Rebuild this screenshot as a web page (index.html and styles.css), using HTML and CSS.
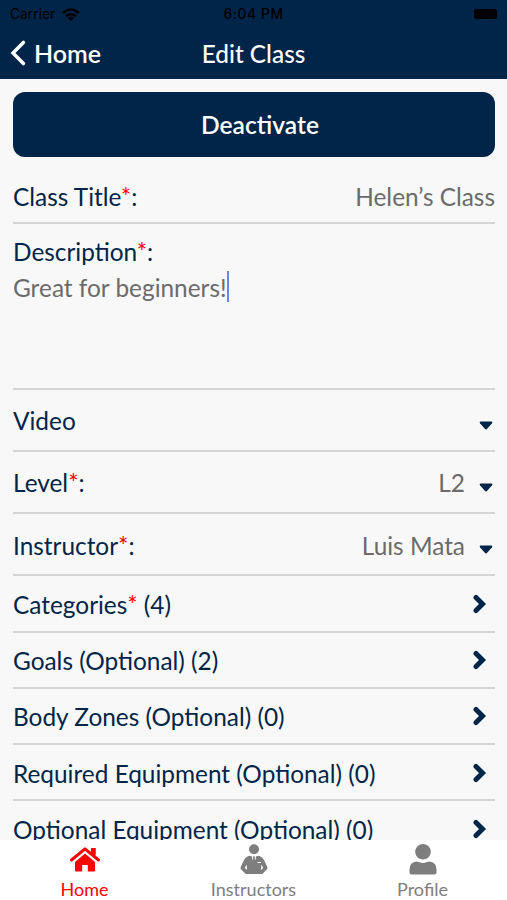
FILE: index.html
```html
<!DOCTYPE html>
<html lang="en">
<head>
<meta charset="utf-8">
<title>Edit Class</title>
<link rel="stylesheet" href="styles.css">
</head>
<body>
<div class="app">
  <header class="top">
    <div class="status">
      <div class="carrier"><span>Carrier</span>
        <svg class="wifi" viewBox="0 0 18 13" width="18" height="13"><g fill="none" stroke="#000" stroke-width="2.6"><path d="M1 5 Q9 -2 17 5"/><path d="M4 8.3 Q9 4 14 8.3"/></g><path d="M6 10 Q9 7.6 12 10 L9 13Z"/></svg>
      </div>
      <div class="time">6:04 PM</div>
      <div class="battery"><i></i></div>
    </div>
    <div class="nav">
      <div class="back">
        <svg viewBox="0 0 16 26" width="16" height="26"><path d="M13.4 2.4 L3 13 L13.4 23.6" fill="none" stroke="#fff" stroke-width="3.5" stroke-linecap="round"/></svg>
        <span>Home</span>
      </div>
      <h1>Edit Class</h1>
      <div></div>
    </div>
  </header>
  <main class="form">
    <button class="deactivate">Deactivate</button>
    <div class="row title"><label>Class Title<b>*</b>:</label><span class="value">Helen’s Class</span></div>
    <div class="description"><label>Description<b>*</b>:</label><div class="text"><span>Great for beginners!</span><i class="caret"></i></div></div>
    <div class="row select"><label>Video</label><svg class="down" viewBox="0 0 14 9"><path d="M1.5 .5H12.500Q14 .8 13 2.200L8.200 7.800Q7 9 5.800 7.800L1 2.200Q0 .8 1.500 .5Z"/></svg></div>
    <div class="row select"><label>Level<b>*</b>:</label><span class="value">L2</span><svg class="down" viewBox="0 0 14 9"><path d="M1.5 .5H12.500Q14 .8 13 2.200L8.200 7.800Q7 9 5.800 7.800L1 2.200Q0 .8 1.500 .5Z"/></svg></div>
    <div class="row select"><label>Instructor<b>*</b>:</label><span class="value">Luis Mata</span><svg class="down" viewBox="0 0 14 9"><path d="M1.5 .5H12.500Q14 .8 13 2.200L8.200 7.800Q7 9 5.800 7.800L1 2.200Q0 .8 1.500 .5Z"/></svg></div>
    <div class="row link"><label>Categories<b>*</b> (4)</label><svg class="right" viewBox="0 0 14 20"><path d="M3 3.500L9.500 10L3 16.500"/></svg></div>
    <div class="row link"><label>Goals (Optional) (2)</label><svg class="right" viewBox="0 0 14 20"><path d="M3 3.500L9.500 10L3 16.500"/></svg></div>
    <div class="row link"><label>Body Zones (Optional) (0)</label><svg class="right" viewBox="0 0 14 20"><path d="M3 3.500L9.500 10L3 16.500"/></svg></div>
    <div class="row link"><label>Required Equipment (Optional) (0)</label><svg class="right" viewBox="0 0 14 20"><path d="M3 3.500L9.500 10L3 16.500"/></svg></div>
    <div class="row link"><label>Optional Equipment (Optional) (0)</label><svg class="right" viewBox="0 0 14 20"><path d="M3 3.500L9.500 10L3 16.500"/></svg></div>
  </main>
  <footer class="tabs">
    <div class="tab active">
      <svg viewBox="0 0 32 32"><path d="M22 4h4.500v10l-4.500-3.500zM16 9.500l10 8.500v8.300q0 1.200-1.200 1.200h-6v-6.500h-5.600v6.500h-6q-1.200 0-1.200-1.200v-8.300z"/><path d="M2.500 16L16 4.800l13.500 11.200" fill="none" stroke="#fff" stroke-width="5.500"/><path d="M22 4h4.500v9l-4.500-3.500z"/><path d="M2.500 16L16 4.800l13.500 11.200" fill="none" stroke="currentColor" stroke-width="3" stroke-linecap="round" stroke-linejoin="round"/></svg>
      <span>Home</span>
    </div>
    <div class="tab">
      <svg viewBox="0 0 32 32"><circle cx="16" cy="5.200" r="5"/><path fill-rule="evenodd" d="M10.500 12l3 0 2.500 8 2.500-8h3q3 .8 4.500 4l3.300 7q.5 1.500-.5 2.500l-4.500 4.500H7.700l-4.500-4.500q-1-1-.5-2.500L6 16q1.500-3.200 4.500-4zM8.500 20.500l-1.700 3.500 2.400 2zM23.500 20.500l1.700 3.500-2.400 2z"/><path d="M14.700 12.500h2.600l-.6 2 .8 4-1.500 3-1.500-3 .8-4z"/><path d="M19.500 18.500h3.500" stroke="#fff" stroke-width="1"/></svg>
      <span>Instructors</span>
    </div>
    <div class="tab">
      <svg viewBox="0 0 32 32"><circle cx="16" cy="7.800" r="7.800"/><path d="M9 17.500q2 0 3.500 .8 3.500 1.200 7 0 1.500-.8 3.500-.8 6.500 1 6.500 8v3q0 2-2 2h-23q-2 0-2-2v-3q0-7 6.500-8z"/></svg>
      <span>Profile</span>
    </div>
  </footer>
</div>
</body>
</html>
```
FILE: styles.css
```css
* { box-sizing: border-box; }
body { margin: 0; background: #f8f8f8; font-family: Lato, Carlito, sans-serif; }
.app { height: 900px; display: flex; flex-direction: column; overflow: hidden; color: #002548; }
.top { height: 79px; flex: none; background: #002548; }
.status { height: 28px; padding: 0 10px; display: grid; grid-template-columns: 1fr auto 1fr; align-items: center; color: #000; font-family: Inter, sans-serif; font-size: 13.800px; }
.carrier { display: flex; align-items: center; gap: 7px; }
.time { font-weight: 500; letter-spacing: .6px; }
.battery { justify-self: end; }
.battery i { display: block; width: 23px; height: 10px; border-radius: 2px; background: #000; }
.nav { height: 51px; padding: 0 10px; display: grid; grid-template-columns: 1fr auto 1fr; align-items: center; color: #fff; }
.back { display: flex; align-items: center; gap: 8px; margin-top: -2px; font-size: 25px; font-weight: 600; }
h1 { margin: -1px 0 0; font-size: 24.400px; font-weight: 500; }
.form { flex: 1; min-height: 0; overflow: hidden; padding: 13px 12px 0 13px; font-size: 24.400px; }
.deactivate { display: block; width: 100%; height: 65px; border: 0; border-radius: 12px; padding: 0 0 0 12px; background: #002548; color: #fff; font: 600 24.600px Lato, Carlito, sans-serif; }
.row { display: flex; align-items: center; border-bottom: 2px solid #d4d4d4; }
.row label { flex: 1; white-space: nowrap; }
label b { color: #f00; font-weight: 400; }
.value, .text { color: #6b6b6b; }
.title { height: 67px; padding-top: 14px; }
.description { height: 165.500px; padding-top: 10px; border-bottom: 2px solid #d4d4d4; line-height: 36px; }
.text { display: flex; align-items: center; height: 35px; }
.caret { width: 2px; height: 31px; margin-top: -2px; background: #6787ee; }
.select { height: 62.300px; padding-top: 2px; }
.down { width: 14px; height: 9px; margin: 9px 2px 0 14px; fill: #002548; }
.link { height: 56.200px; padding-top: 2px; }
.right { width: 14px; height: 20px; margin: -1px 8px 0 0; fill: none; stroke: #002548; stroke-width: 5; stroke-linecap: round; }
.tabs { flex: none; height: 60px; background: #fff; display: grid; grid-template-columns: repeat(3, 1fr); color: #7e7e7e; }
.tab { display: flex; flex-direction: column; align-items: center; padding-top: 4px; font-size: 18px; line-height: 26px; }
.tab svg { width: 32px; height: 32px; fill: currentColor; }
.active { color: #f00; }
```
